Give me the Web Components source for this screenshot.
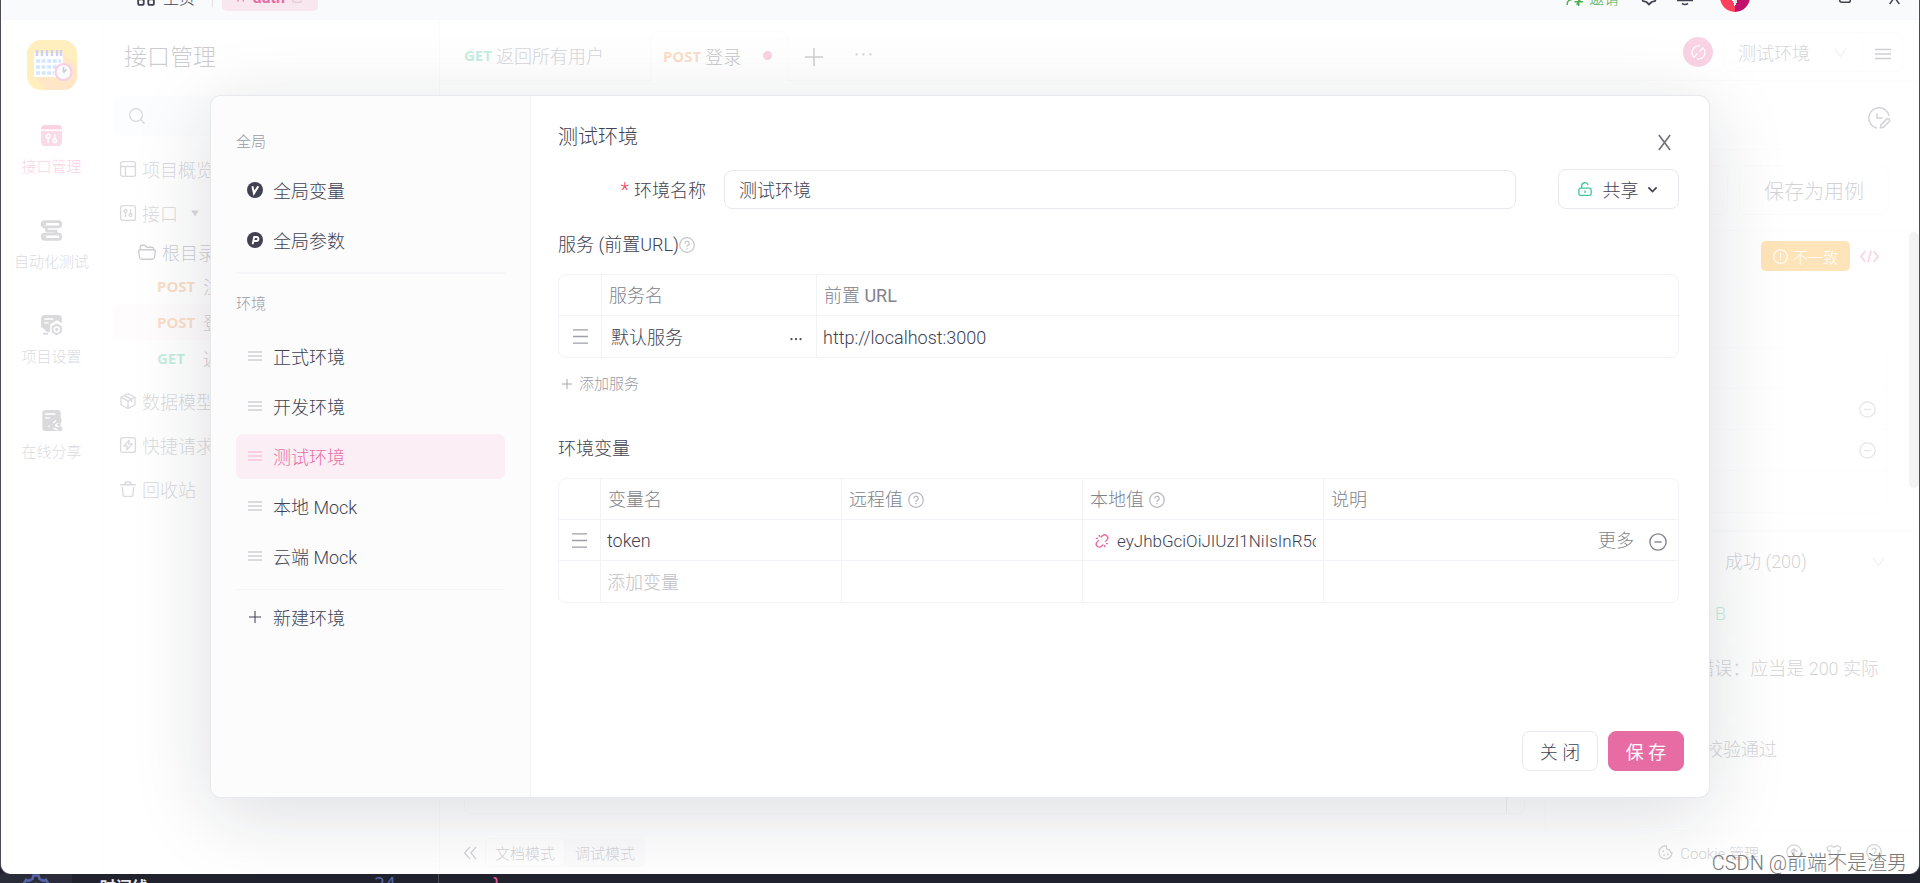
<!DOCTYPE html>
<html lang="zh-CN">
<head>
<meta charset="utf-8">
<title>测试环境</title>
<style>
  html, body { margin: 0; height: 100%; }
  body { background: #20222d; overflow: hidden; }
</style>
</head>
<body>
<app-window></app-window>

<script>
const BASE = `
  *, *::before, *::after { box-sizing: border-box; }
  button, input, select { font: inherit; color: inherit; background: none; border: 0; padding: 0; margin: 0; outline: 0; min-width: 0; }
  button { cursor: pointer; white-space: nowrap; }
  a { color: inherit; text-decoration: none; }
  h1, h2, p { margin: 0; font-weight: inherit; }
`;

function component(name, markup) {
  const template = document.createElement('template');
  template.innerHTML = markup.replace('<style>', '<style>' + BASE);
  customElements.define(name, class extends HTMLElement {
    constructor() {
      super();
      this.attachShadow({ mode: 'open' }).append(template.content.cloneNode(true));
    }
  });
}

const ICONS = {
  home: '<g fill="none" stroke="currentColor" stroke-width="1.6"><rect x="1" y="1" width="5" height="5" rx="1"/><rect x="10" y="1" width="5" height="5" rx="1"/><rect x="1" y="10" width="5" height="5" rx="1.5"/><rect x="10" y="10" width="5" height="5" rx="1.5"/></g>',
  tools: '<path d="M4 2v12M11 2v12M2 6h5M9 10h5" fill="none" stroke="currentColor" stroke-width="1.6"/>',
  copy: '<path d="M5 2h8v8M2 8v4a2 2 0 0 0 2 2h6a2 2 0 0 0 2-2" fill="none" stroke="currentColor" stroke-width="1.4"/>',
  invite: '<g fill="none" stroke="currentColor" stroke-width="1.4"><circle cx="6" cy="4" r="3"/><path d="M1 15c0-3 2-5 5-5M12 8v8M8 12h8M10 15l4-6"/></g>',
  hexnut: '<g fill="none" stroke="currentColor" stroke-width="1.8"><path d="M5 1h6l4.500 7.500-1.500 3.500-3.500 1-2.500 2.500-2.500-2.500-3.500-1L.5 8.500z"/><circle cx="8" cy="7" r="2.500"/></g>',
  bell: '<path d="M3 11V7a5 5 0 0 1 10 0v4M0 11.500h16M5 14.500q3 2 6 0" fill="none" stroke="currentColor" stroke-width="1.600"/>',
  square: '<rect x="2" y="2" width="12" height="12" rx="2" fill="none" stroke="currentColor" stroke-width="1.8"/>',
  close: '<path d="M2 0l12 16M14 0L2 16" fill="none" stroke="currentColor" stroke-width="1.800"/>',
  api: '<path d="M0 3.500A3 3 0 0 1 3 0h10a3 3 0 0 1 3 3v.5z" fill="currentColor"/><path d="M0 4.500h16V13a3 3 0 0 1-3 3H3a3 3 0 0 1-3-3z" fill="currentColor" opacity=".85"/><g fill="none" stroke="#fff" stroke-width="1.1"><circle cx="5.500" cy="8.500" r="1.400"/><path d="M5.500 10v3.500M10.500 7v3.500"/><circle cx="10.500" cy="12" r="1.400"/></g>',
  auto: '<g fill="none" stroke="currentColor" stroke-width="2.200"><rect x="1" y="1.200" width="14" height="4" rx="1.800"/><rect x="1" y="10.800" width="14" height="4" rx="1.800"/></g><path d="M4 6v1.500q0 1 1.200 1h6.300v2" fill="none" stroke="currentColor" stroke-width="2"/><path d="M3 2v2M3 12v2" stroke="currentColor" stroke-width="2"/>',
  projset: '<path d="M3 0h10a3 3 0 0 1 3 3v3l-4-2-5 3v6H5a3 3 0 0 1-2-1.500L0 9V3a3 3 0 0 1 3-3z" fill="currentColor"/><path d="M2.500 3h7M2.500 6h3.500" stroke="#fff" stroke-width="1.100"/><path d="M1.500 13.500h4v1.500h-4z" fill="currentColor"/><path d="M12 6l4.300 2.500v5L12 16l-4.300-2.500v-5z" fill="currentColor" stroke="#fff" stroke-width=".8"/><circle cx="12" cy="11" r="1.900" fill="none" stroke="#fff" stroke-width="1.200"/>',
  share: '<rect x="1" y="0" width="14" height="16" rx="2.500" fill="currentColor"/><path d="M3 3h8M3 6h4" stroke="#fff" stroke-width="1.100"/><g fill="none" stroke="#fff" stroke-width="3.500"><path d="M13.500 8L8.500 12l6 2.500"/></g><g stroke="currentColor" stroke-width="1.400" fill="currentColor"><path d="M13.500 8L8.500 12l6 2.500" fill="none"/><circle cx="13.500" cy="8" r="1.500"/><circle cx="8.500" cy="12" r="1.500"/><circle cx="14.500" cy="14.500" r="1.200"/></g>',
  search: '<g fill="none" stroke="currentColor" stroke-width="1.300"><circle cx="7" cy="7" r="6.400"/><path d="M11.500 11.500L15.500 15.800"/></g>',
  layout: '<g fill="none" stroke="currentColor" stroke-width="1.300"><rect x=".6" y=".6" width="14.800" height="14.800" rx="2"/><path d="M1 5.500h14M5.500 5.500V15"/></g>',
  apibox: '<g fill="none" stroke="currentColor" stroke-width="1.300"><rect x=".6" y=".6" width="14.800" height="14.800" rx="2"/><circle cx="5.500" cy="6" r="1.500"/><path d="M5.500 7.500V12M10.500 4v4.500"/><circle cx="10.500" cy="10" r="1.500"/></g>',
  folder: '<path d="M2 6V3.500A1.500 1.500 0 0 1 3.500 2H6l2 1.800h4.500A1.500 1.500 0 0 1 14 5.300V6M1.800 6h12.400a1.200 1.200 0 0 1 1.200 1.400l-.8 5.500a1.800 1.800 0 0 1-1.700 1.500H3.100a1.800 1.800 0 0 1-1.700-1.500L.6 7.400A1.200 1.200 0 0 1 1.800 6z" fill="none" stroke="currentColor" stroke-width="1.200"/>',
  cube: '<path d="M8 .5l7 3.700v7.600L8 15.500l-7-3.700V4.200zM1.200 4.300L8 7.800l6.800-3.500M8 7.800v7.400M4.500 2.600l7 3.600v3" fill="none" stroke="currentColor" stroke-width="1.300" stroke-linejoin="round"/>',
  bolt: '<rect x=".6" y=".6" width="14.800" height="14.800" rx="2" fill="none" stroke="currentColor" stroke-width="1.300"/><path d="M9.200 3L3.800 9.200h3.500L6.800 13l5.400-6.200H8.700z" fill="none" stroke="currentColor" stroke-width="1.200" stroke-linejoin="round"/>',
  trash: '<path d="M.2 3.800h15.600M5 3.500V2.300A1.500 1.500 0 0 1 6.500 1h3A1.500 1.500 0 0 1 11 2.300v1.200M2.300 6l.7 7.500a2 2 0 0 0 2 1.900h6a2 2 0 0 0 2-1.900L13.700 6" fill="none" stroke="currentColor" stroke-width="1.400"/>',
  caret: '<path d="M2 4h12l-6 9z" fill="currentColor"/>',
  plus: '<path d="M8 0v16M0 8h16" stroke="currentColor" stroke-width="1.400"/>',
  more: '<g fill="currentColor"><circle cx="2" cy="8" r="1.500"/><circle cx="8" cy="8" r="1.500"/><circle cx="14" cy="8" r="1.500"/></g>',
  dots: '<g fill="currentColor"><circle cx="1.500" cy="6" r="1"/><circle cx="8" cy="6" r="1"/><circle cx="14.500" cy="6" r="1"/></g>',
  menu: '<path d="M0 3.500h16M0 8h16M0 12.500h16" stroke="currentColor" stroke-width="1.700"/>',
  drag: '<path d="M0 1h16M0 8h16M0 15h16" stroke="currentColor" stroke-width="1.400"/>',
  grip: '<path d="M1 4h14M1 8h14M1 12h14" stroke="currentColor" stroke-width="1.400"/>',
  chevron: '<path d="M1 3l7 10 7-10" fill="none" stroke="currentColor" stroke-width="1.200"/>',
  down: '<path d="M2 5l6 6 6-6" fill="none" stroke="currentColor" stroke-width="2.400"/>',
  noproxy: '<g fill="none" stroke="currentColor" stroke-width="1.300"><path d="M9.500 1.200A7 7 0 0 0 3.200 13M6.500 14.800A7 7 0 0 0 12.800 3M3 13.500L6.800 9M9.200 7L13 2.500"/></g>',
  clockedit: '<g fill="none" stroke="currentColor" stroke-width="1.100"><path d="M15.400 6.500A7.500 7.500 0 1 0 6.500 15.400M6.500 4.500V8h4M9 15.200l.4-2.200 4.200-4.200a1.200 1.200 0 0 1 1.800 1.800l-4.200 4.200z"/></g>',
  warn: '<circle cx="8" cy="8" r="7.200" fill="none" stroke="currentColor" stroke-width="1.200"/><path d="M8 4v5M8 10.500V12" stroke="currentColor" stroke-width="1.300"/>',
  code: '<path d="M4.500 3.500L.8 8l3.700 4.500M11.500 3.500L15.200 8l-3.700 4.500M9.300 3L6.700 13" fill="none" stroke="currentColor" stroke-width="1.400"/>',
  minus: '<circle cx="8" cy="8" r="7.200" fill="none" stroke="currentColor" stroke-width="1.200"/><path d="M4.800 8h6.400" stroke="currentColor" stroke-width="1.200"/>',
  help: '<circle cx="8" cy="8" r="7.300" fill="none" stroke="currentColor" stroke-width="1.200"/><path d="M5.800 6.400a2.200 2.200 0 1 1 3.200 2q-1 .5-1 1.400M8 11v1.300" fill="none" stroke="currentColor" stroke-width="1.200"/>',
  v: '<circle cx="8" cy="8" r="8" fill="currentColor"/><path d="M5.400 4.200L7 11.300l4.300-7.100" fill="none" stroke="#fff" stroke-width="2"/>',
  p: '<circle cx="8" cy="8" r="8" fill="currentColor"/><path d="M5.600 12.200L7.200 5h2.300a1.800 1.800 0 0 1-.3 4H6.600" fill="none" stroke="#fff" stroke-width="1.900"/>',
  lock: '<g fill="none" stroke="currentColor" stroke-width="1.500"><rect x="1" y="7" width="14" height="8.300" rx="2"/><path d="M4.200 7V4.600a3.800 3.800 0 0 1 7.400-1.200M8 9.800v2.800"/></g>',
  unlink: '<g fill="none" stroke="currentColor" stroke-width="1.600"><path d="M6.500 4L8.500 2a3.500 3.500 0 0 1 5 5l-2 2M9.500 12l-2 2a3.500 3.500 0 0 1-5-5l2-2M5 1v2.500M1 5h2.500M11 12.500V15M12.500 11H15"/></g>',
  collapse: '<path d="M8 1L2 8l6 7M15 1L9 8l6 7" fill="none" stroke="currentColor" stroke-width="1.500"/>',
  cookie: '<path d="M9 1A7 7 0 1 0 15 8.500 3 3 0 0 1 12.500 5 3 3 0 0 1 9 1z" fill="none" stroke="currentColor" stroke-width="1.300"/><g fill="currentColor"><circle cx="5.500" cy="6.500" r="1"/><circle cx="6.500" cy="11" r="1"/><circle cx="10.500" cy="10" r="1"/></g>',
  up: '<circle cx="8" cy="8" r="7.200" fill="none" stroke="currentColor" stroke-width="1.200"/><path d="M8 12V5M4.800 8L8 4.800 11.200 8" fill="none" stroke="currentColor" stroke-width="1.400"/>',
  shirt: '<path d="M5 1.500L1 3.500 2 7l2-.5V14.500h8V6.500l2 .5 1-3.500-4-2q-3 3-6 0z" fill="none" stroke="currentColor" stroke-width="1.300" stroke-linejoin="round"/>',
  gear: '<g fill="none" stroke="currentColor" stroke-width="1.400"><circle cx="8" cy="8" r="2.500"/><path d="M6.500.8h3l.5 2 1.700 1 2-.6 1.500 2.600L13.700 8l1.500 2.200-1.500 2.600-2-.6-1.700 1-.5 2h-3l-.5-2-1.700-1-2 .6L.8 10.200 2.300 8 .8 5.800l1.500-2.600 2 .6 1.700-1z"/></g>',
};

customElements.define('ui-icon', class extends HTMLElement {
  connectedCallback() {
    if (this.shadowRoot) return;
    const size = this.getAttribute('size') || 16;
    this.attachShadow({ mode: 'open' }).innerHTML = `
      <style>:host { display: inline-flex; flex: none; vertical-align: middle; } svg { display: block; overflow: visible; }</style>
      <svg viewBox="0 0 16 16" width="${size}" height="${size}" aria-hidden="true">${ICONS[this.getAttribute('name')]}</svg>`;
  }
});

component('title-bar', `
<style>
  :host { display: flex; align-items: flex-end; height: 20px; overflow: hidden; background: #f9fafc; }
  .row { flex: 1; display: flex; align-items: center; height: 46px; padding: 0 18px 0 136px; font-size: 16px; }
  .home { display: flex; align-items: center; gap: 8px; }
  .sep { width: 1px; height: 20px; background: #e0e1e6; margin: 0 9px 0 17px; }
  .tab { display: flex; align-items: center; gap: 6px; height: 28px; padding: 0 13px; border-radius: 5px; background: #f8e7ef; color: #e96da5; font-weight: 700; font-size: 16px; }
  .tab ui-icon:last-child { color: #ddc5d0; }
  .right { margin-left: auto; display: flex; align-items: center; }
  .invite { display: flex; gap: 6px; align-items: center; color: #4caf50; margin-right: 22px; font-size: 15px; }
  .right > ui-icon { margin-right: 20px; }
  .avatar { width: 30px; height: 30px; border-radius: 50%; margin: 0 88px 0 7px; background: conic-gradient(at 50% 82%, #e4e2dc 0 22deg, #c20f6c 22deg 180deg, #ff3f5c 180deg 335deg, #f3f1ec 335deg); }
  .right > .box { margin-right: 36px; }
  .right > .x { margin-right: 0; }
</style>
<div class="row">
  <a class="home" href="#home"><ui-icon name="home" size="18"></ui-icon>主页</a>
  <span class="sep"></span>
  <a class="tab" href="#auth"><ui-icon name="tools" size="12"></ui-icon>auth<ui-icon name="copy" size="14"></ui-icon></a>
  <div class="right">
    <a class="invite" href="#invite"><ui-icon name="invite" size="17"></ui-icon>邀请</a>
    <ui-icon name="hexnut"></ui-icon>
    <ui-icon name="bell"></ui-icon>
    <span class="avatar"></span>
    <ui-icon class="box" name="square" size="14"></ui-icon>
    <ui-icon class="x" name="close" size="13"></ui-icon>
  </div>
</div>`);

component('nav-item', `
<style>
  :host { display: block; color: #82848f; font-size: 15px; line-height: 20px; }
  :host([active]) { color: #e96da5; }
  a { display: flex; flex-direction: column; align-items: center; gap: 11px; }
</style>
<a href="#nav"><slot name="icon"></slot><slot></slot></a>`);

component('side-nav', `
<style>
  :host { display: flex; flex-direction: column; align-items: center; gap: 43px; width: 101px; padding-top: 20px; }
  .logo { display: block; margin-bottom: -8px; }
</style>
<svg class="logo" width="50" height="50" viewBox="0 0 50 50" role="img" aria-label="项目">
  <clipPath id="r"><rect width="50" height="50" rx="14"/></clipPath>
  <g clip-path="url(#r)">
    <rect width="50" height="50" fill="#ffca28"/>
    <path d="M36 13l14 13v24H19L7 37z" fill="#ffab40"/>
    <rect x="7" y="13" width="29" height="24" fill="#fff"/>
    <g stroke="#5567d8" stroke-width="2.400"><path d="M10 10v6M15 10v6M20 10v6M25 10v6M30 10v6M34 10v6"/></g>
    <g stroke="#6aaef6" stroke-width="3.500" stroke-dasharray="4 1.600"><path d="M9 21h25M9 27h25M9 33h18"/></g>
    <circle cx="36.500" cy="32" r="8" fill="#eef0f5" stroke="#e45aa4" stroke-width="2.200"/>
    <path d="M36.500 27v5.500M36.500 32.500l3-3" stroke="#555" stroke-width="1.600"/>
  </g>
</svg>
<nav-item active><ui-icon slot="icon" name="api" size="21"></ui-icon>接口管理</nav-item>
<nav-item><ui-icon slot="icon" name="auto" size="21"></ui-icon>自动化测试</nav-item>
<nav-item><ui-icon slot="icon" name="projset" size="21"></ui-icon>项目设置</nav-item>
<nav-item><ui-icon slot="icon" name="share" size="21"></ui-icon>在线分享</nav-item>`);

component('tree-row', `
<style>
  :host { display: block; height: 44px; color: #80828c; }
  a { display: flex; align-items: center; gap: 6px; height: 100%; padding-left: 7px; white-space: nowrap; }
  :host([level="1"]) { height: 33px; color: #5b5d68; }
  :host([level="1"]) a { padding-left: 25px; }
  :host([level="2"]) { height: 36px; color: #5b5d68; }
  :host([level="2"]) a { padding-left: 44px; gap: 0; }
  :host([active]) { background: #fdf5f8; border-radius: 6px; }
  ::slotted(b) { width: 46px; font: 700 15px "Open Sans", sans-serif; }
  ::slotted(.post) { color: #ef8f4a; }
  ::slotted(.get) { color: #42c796; }
</style>
<a href="#row"><slot></slot></a>`);

component('api-tree', `
<style>
  :host { display: block; width: 338px; padding: 0 11px 0 10px; border-left: 1px solid #f6f7f8; border-right: 1px solid #f0f1f3; border-top-left-radius: 10px; font-size: 18px; overflow: hidden; }
  h1 { font-size: 23px; line-height: 32px; padding: 22px 0 22px 11px; color: #50525e; }
  .search { display: flex; align-items: center; height: 40px; padding-left: 16px; margin-bottom: 11px; background: #f6f7fb; border-radius: 8px; color: #80828c; }
  .search input { flex: 1; }
  .folder { margin-bottom: 3px; }
  ui-icon[name="caret"] { margin-left: 6px; }
</style>
<h1>接口管理</h1>
<label class="search"><ui-icon name="search"></ui-icon><input type="search" aria-label="搜索"></label>
<tree-row><ui-icon name="layout"></ui-icon>项目概览</tree-row>
<tree-row><ui-icon name="apibox"></ui-icon>接口<ui-icon name="caret" size="10"></ui-icon></tree-row>
<div class="folder">
  <tree-row level="1"><ui-icon name="folder" size="18"></ui-icon>根目录</tree-row>
  <tree-row level="2"><b class="post">POST</b>注册</tree-row>
  <tree-row level="2" active><b class="post">POST</b>登录</tree-row>
  <tree-row level="2"><b class="get">GET</b>返回所有用户</tree-row>
</div>
<tree-row><ui-icon name="cube"></ui-icon>数据模型</tree-row>
<tree-row><ui-icon name="bolt"></ui-icon>快捷请求</tree-row>
<tree-row><ui-icon name="trash"></ui-icon>回收站</tree-row>`);

component('tab-bar', `
<style>
  :host { display: flex; align-items: flex-end; height: 61px; padding-right: 16px; font-size: 18px; background: #fdfdfd; box-shadow: inset 0 -1px #eef0f2; color: #70727d; }
  b { font: 700 15px "Open Sans", sans-serif; }
  .get { color: #42c796; } .post { color: #ef8f4a; }
  .tab { display: flex; align-items: center; gap: 4px; height: 50px; padding-bottom: 2px; margin-left: 24px; }
  .active { padding: 0 15px 2px 12px; margin-left: 46px; width: 138px; border: 1px solid #f3f4f6; border-bottom: 0; border-radius: 8px 8px 0 0; background: #fff; color: #3a3c48; }
  .dot { width: 9px; height: 9px; margin-left: auto; border-radius: 50%; background: #e96da5; }
  button { height: 50px; margin-left: 17px; padding-bottom: 2px; color: #60626c; }
  button + button { margin-left: 32px; }
  .right { display: flex; align-items: center; gap: 11px; margin-left: auto; padding-bottom: 9px; }
  .proxy { display: grid; place-items: center; width: 30px; height: 30px; padding: 0; border-radius: 50%; background: #e96da5; color: #fff; margin: 0; }
  .env { display: flex; align-items: center; width: 179px; height: 40px; border: 1px solid #f3f4f6; border-radius: 8px; background: #fff; }
  .env select { appearance: none; flex: 1; padding: 2px 0 0 13px; height: 38px; }
  .env > ui-icon { color: #b5b7bd; margin-right: 15px; }
  .env button { width: 40px; height: 38px; margin: 0; padding: 0; border-left: 1px solid #f3f4f6; }
</style>
<a class="tab" href="#get"><b class="get">GET</b>返回所有用户</a>
<a class="tab active" href="#post"><b class="post">POST</b>登录<span class="dot"></span></a>
<button aria-label="新建标签"><ui-icon name="plus" size="18"></ui-icon></button>
<button aria-label="更多标签"><ui-icon name="dots" size="17"></ui-icon></button>
<div class="right">
  <button class="proxy" aria-label="代理"><ui-icon name="noproxy" size="15"></ui-icon></button>
  <div class="env">
    <select aria-label="当前环境"><option>测试环境</option></select>
    <ui-icon name="chevron" size="13"></ui-icon>
    <button aria-label="管理环境"><ui-icon name="menu" size="16"></ui-icon></button>
  </div>
</div>`);

component('request-panel', `
<style>
  :host { flex: 1; display: flex; flex-direction: column; min-height: 0; font-size: 18px; color: #6a6c76; }
  .head { height: 69px; margin-right: 19px; padding: 6px 10px 0 0; display: flex; align-items: center; justify-content: flex-end; border-bottom: 1px solid #f6f7f8; }
  .actions { height: 81px; display: flex; align-items: center; justify-content: flex-end; gap: 11px; padding-right: 30px; border-bottom: 1px solid #f6f7f8; font-size: 20px; }
  .actions button { width: 150px; height: 50px; border: 1px solid #f3f4f6; border-radius: 8px; }
  .body { display: flex; height: 301px; border-bottom: 2px solid #f6f7f8; }
  .fields { flex: 1; }
  .status { display: flex; align-items: center; justify-content: flex-end; gap: 10px; height: 51px; padding-right: 10px; margin-right: 20px; border-bottom: 1px solid #f9fafa; color: #e96da5; }
  .badge { display: flex; align-items: center; gap: 5px; height: 30px; padding: 0 12px; border-radius: 5px; background: #ffa516; color: #fff; font-size: 15px; }
  table { width: calc(100% - 45px); margin: 65px 0 0 24px; border-spacing: 0; border: 1px solid #f6f7f8; border-radius: 8px; }
  td { height: 41px; padding: 0 11px; text-align: right; line-height: 18px; border-bottom: 1px solid #f6f7f8; color: #a5a7ae; }
  tr:last-child td { border: 0; }
  .thumb { width: 10px; height: 256px; margin-top: 1px; border-radius: 5px; background: #d5d6d8; }
  .response { flex: 1; display: grid; grid-template-columns: 1fr 374px; min-height: 0; }
  .preview { margin: 16px 20px 16px 24px; border: 1px solid #f0f1f3; border-radius: 8px; padding-right: 17px; }
  .preview div { height: 100%; border-right: 1px solid #cfd1d6; }
  .checks { border-left: 1px solid #f3f4f6; padding-right: 20px; }
  .result { display: flex; align-items: center; height: 59px; padding: 0 14px 0 179px; }
  .result select { appearance: none; flex: 1; }
  .result ui-icon { color: #b5b7bd; }
  .checks p { display: flex; align-items: center; height: 44px; margin-bottom: 11px; border-radius: 6px; background: #fafefc; white-space: nowrap; justify-content: flex-end; }
  .checks .size { color: #42c796; padding-right: 173px; }
  .checks .error { height: 68px; align-items: flex-start; padding: 8px 20px 0 0; margin-bottom: 12px; }
  .checks .pass { padding-right: 122px; }
</style>
<div class="head"><ui-icon name="clockedit" size="22"></ui-icon></div>
<div class="actions"><button aria-label="保存"></button><button>保存为用例</button></div>
<div class="body">
  <div class="fields">
    <div class="status"><span class="badge"><ui-icon name="warn" size="15"></ui-icon>不一致</span><ui-icon name="code" size="19"></ui-icon></div>
    <table aria-label="返回字段">
      <tr><td></td></tr>
      <tr><td><ui-icon name="minus" size="17"></ui-icon></td></tr>
      <tr><td><ui-icon name="minus" size="17"></ui-icon></td></tr>
      <tr><td></td></tr>
    </table>
  </div>
  <div class="thumb"></div>
</div>
<div class="response">
  <div class="preview"><div></div></div>
  <div class="checks">
    <label class="result"><select aria-label="返回响应"><option>成功 (200)</option></select><ui-icon name="chevron" size="13"></ui-icon></label>
    <p class="size">5 B</p>
    <p class="error">错误：应当是 200 实际</p>
    <p class="pass">校验通过</p>
  </div>
</div>`);

component('status-bar', `
<style>
  :host { display: flex; align-items: center; height: 44px; padding: 0 37px 1px 23px; border-top: 1px solid #f6f7f8; font-size: 15px; color: #6a6c76; }
  .modes { display: flex; margin-left: 8px; border-radius: 6px; background: #f5f5f9; }
  .modes button { width: 80px; height: 29px; border-radius: 6px; }
  .modes .on { background: #fff; border: 1px solid #f0f1f3; }
  .right { margin-left: auto; display: flex; align-items: center; gap: 24px; }
  .cookie { display: flex; align-items: center; gap: 7px; margin-right: 3px; }
</style>
<button aria-label="收起"><ui-icon name="collapse" size="14"></ui-icon></button>
<div class="modes"><button class="on">文档模式</button><button>调试模式</button></div>
<div class="right">
  <a class="cookie" href="#cookie"><ui-icon name="cookie" size="15"></ui-icon>Cookie 管理</a>
  <ui-icon name="up"></ui-icon><ui-icon name="shirt"></ui-icon><ui-icon name="help"></ui-icon>
</div>`);

component('env-item', `
<style>
  :host { display: block; height: 45px; border-radius: 7px; }
  :host([active]) { background: #fbeff5; color: #e96da5; }
  a { display: flex; align-items: center; gap: 10px; height: 100%; padding: 0 0 2px 11px; }
  ::slotted(ui-icon[name="grip"]) { color: #cfd0d5; }
  :host([active]) ::slotted(ui-icon) { color: #f5c6db; }
</style>
<a href="#env"><slot name="icon"></slot><span><slot></slot></span></a>`);

component('env-sidebar', `
<style>
  :host { display: block; width: 320px; padding: 31px 25px 0; background: #fcfcfd; border-right: 1px solid #f2f3f6; border-radius: 10px 0 0 10px; }
  h2 { font-size: 15px; line-height: 30px; color: #9a9ba5; }
  .group { display: grid; gap: 5px; margin-top: 11px; }
  .envs { margin-top: 15px; }
  .rule { height: 2px; margin: 9px 0 15px; background: #f5f5f7; }
  .thin { height: 1px; margin: 10px 0 5px; }
</style>
<h2>全局</h2>
<div class="group">
  <env-item><ui-icon slot="icon" name="v"></ui-icon>全局变量</env-item>
  <env-item><ui-icon slot="icon" name="p"></ui-icon>全局参数</env-item>
</div>
<div class="rule"></div>
<h2>环境</h2>
<div class="group envs">
  <env-item><ui-icon slot="icon" name="grip"></ui-icon>正式环境</env-item>
  <env-item><ui-icon slot="icon" name="grip"></ui-icon>开发环境</env-item>
  <env-item active><ui-icon slot="icon" name="grip"></ui-icon>测试环境</env-item>
  <env-item><ui-icon slot="icon" name="grip"></ui-icon>本地 Mock</env-item>
  <env-item><ui-icon slot="icon" name="grip"></ui-icon>云端 Mock</env-item>
</div>
<div class="rule thin"></div>
<env-item><ui-icon slot="icon" name="plus" size="12" style="margin:0 2px"></ui-icon>新建环境</env-item>`);

const TABLE = `
  :host { display: block; }
  table { width: 100%; table-layout: fixed; border-spacing: 0; border: 1px solid #f2f3f7; border-radius: 8px; text-align: left; }
  th, td { height: 41px; padding: 2px 7px 0; font-weight: inherit; line-height: 26px; border-right: 1px solid #f2f3f7; border-bottom: 1px solid #f2f3f7; }
  tr > :last-child { border-right: 0; }
  tbody tr:last-child td { border-bottom: 0; }
  th { color: #80828c; }
  th b { font-weight: 400; }
  td:first-child { text-align: center; padding: 0; line-height: 0; color: #9ea0a9; }
  .title { display: flex; align-items: center; gap: 5px; }
  th ui-icon { color: #b4b6bc; }
  .cell { display: flex; align-items: center; }
  input { width: 100%; }
  input::placeholder { color: #bfc0c6; opacity: 1; }
`;

component('service-table', `
<style>${TABLE}
  .cell { justify-content: space-between; padding: 0 7px 0 2px; }
  td.url { padding-left: 6px; }
</style>
<table>
  <colgroup><col style="width:43px"><col style="width:215px"><col></colgroup>
  <thead><tr><th></th><th>服务名</th><th>前置 <b>URL</b></th></tr></thead>
  <tbody><tr>
    <td><ui-icon name="drag" size="15"></ui-icon></td>
    <td><div class="cell">默认服务<button aria-label="服务操作"><ui-icon name="more" size="12"></ui-icon></button></div></td>
    <td class="url"><input aria-label="前置 URL" value="http://localhost:3000"></td>
  </tr></tbody>
</table>`);

component('variable-table', `
<style>${TABLE}
  td { padding-left: 6px; }
  .local { gap: 8px; padding-left: 6px; }
  .local ui-icon { color: #e96da5; }
  .local input { font-size: 17px; }
  .ops { justify-content: flex-end; gap: 15px; padding-right: 4px; color: #80828c; }
</style>
<table>
  <colgroup><col style="width:42px"><col style="width:241px"><col style="width:241px"><col style="width:241px"><col></colgroup>
  <thead><tr><th></th><th>变量名</th><th><span class="title">远程值<ui-icon name="help"></ui-icon></span></th><th><span class="title">本地值<ui-icon name="help"></ui-icon></span></th><th>说明</th></tr></thead>
  <tbody>
    <tr>
      <td><ui-icon name="drag" size="15"></ui-icon></td>
      <td><input aria-label="变量名" value="token"></td>
      <td></td>
      <td><div class="cell local"><ui-icon name="unlink" size="14"></ui-icon><input aria-label="本地值" value="eyJhbGciOiJIUzI1NiIsInR5c"></div></td>
      <td><div class="cell ops"><button>更多</button><button aria-label="删除变量"><ui-icon name="minus" size="18"></ui-icon></button></div></td>
    </tr>
    <tr><td></td><td><input aria-label="新变量" placeholder="添加变量"></td><td></td><td></td><td></td></tr>
  </tbody>
</table>`);

component('env-dialog', `
<style>
  :host { display: flex; background: #fff; border-radius: 10px; color: #404251; font-size: 18px; box-shadow: 0 0 1px 1px #e6e8ec, 0 16px 80px rgba(20, 28, 50, .15); }
  section { flex: 1; display: flex; flex-direction: column; min-width: 0; padding: 24px 30px 26px 27px; }
  header { display: flex; justify-content: space-between; align-items: center; height: 30px; font-size: 20px; }
  header button { align-self: flex-end; padding: 0 7px 0 0; color: #70727c; line-height: 14px; }
  form { display: flex; align-items: center; margin-top: 19px; }
  label { width: 148px; text-align: right; }
  label::before { content: "*"; color: #f04864; margin-right: 5px; font-size: 20px; }
  form input { flex: 1; height: 39px; margin-left: 18px; padding: 0 14px; border: 1px solid #e8e9ee; border-radius: 8px; }
  .share { display: flex; align-items: center; justify-content: center; width: 121px; height: 40px; margin-left: 42px; padding-right: 2px; border: 1px solid #e8e9ee; border-radius: 8px; }
  .share ui-icon:first-child { color: #42c796; margin-right: 11px; }
  .share ui-icon:last-child { margin-left: 8px; }
  h2 { font-size: 18px; line-height: 30px; }
  .services { margin: 21px 0 14px; display: flex; align-items: center; }
  .services ui-icon { color: #c5c6cb; }
  .add { display: flex; align-items: center; gap: 7px; align-self: flex-start; margin: 11px 0 35px; padding-left: 4px; line-height: 30px; font-size: 15px; color: #9a9ba5; }
  variable-table { margin-top: 14px; }
  footer { display: flex; justify-content: flex-end; gap: 10px; margin-top: auto; margin-right: -5px; }
  footer button { width: 76px; height: 40px; border: 1px solid #e8e9ee; border-radius: 8px; }
  footer .primary { border-color: #e86ca4; background: #e86ca4; color: #fff; font-weight: 400; }
</style>
<env-sidebar></env-sidebar>
<section>
  <header>测试环境<button aria-label="关闭窗口"><ui-icon name="close" size="15"></ui-icon></button></header>
  <form>
    <label for="name">环境名称</label><input id="name" value="测试环境">
    <button class="share" type="button"><ui-icon name="lock" size="14"></ui-icon>共享<ui-icon name="down" size="11"></ui-icon></button>
  </form>
  <h2 class="services">服务 (前置URL)<ui-icon name="help"></ui-icon></h2>
  <service-table></service-table>
  <button class="add"><ui-icon name="plus" size="10"></ui-icon>添加服务</button>
  <h2>环境变量</h2>
  <variable-table></variable-table>
  <footer><button>关 闭</button><button class="primary">保 存</button></footer>
</section>`);

component('editor-strip', `
<style>
  :host { display: flex; height: 9px; overflow: hidden; background: #20222d; font: 400 19px/20px "Noto Sans", "Noto Sans CJK SC", sans-serif; color: #5563a8; }
  .activity { width: 72px; padding-left: 22px; background: #2a2c3a; }
  .timeline { display: flex; gap: 10px; width: 302px; padding: 3px 0 0 12px; font-size: 16px; font-weight: 700; color: #e8e9ee; }
  .line { width: 64px; }
  .brace { border-left: 1px solid #4a4c58; padding-left: 54px; color: #e0569a; }
</style>
<div class="activity"><ui-icon name="gear" size="28"></ui-icon></div>
<div class="timeline"><span>›</span><span>时间线</span></div>
<div class="line">24</div>
<div class="brace">}</div>`);

component('app-window', `
<style>
  :host { display: flex; flex-direction: column; height: 100vh; position: relative; font: 300 18px "Roboto", "Noto Sans CJK SC", sans-serif; color: #404251; }
  .window { flex: 1; display: flex; flex-direction: column; min-height: 0; margin: 0 1px; border-radius: 0 0 10px 10px; background: #fff; overflow: hidden; box-shadow: 0 0 0 1px #4a4c58; }
  .body { flex: 1; display: flex; position: relative; min-height: 0; }
  main { flex: 1; display: flex; flex-direction: column; min-width: 0; }
  .mask { position: absolute; inset: 0; display: grid; padding: 76px 210px 77px; background: rgba(255, 255, 255, .7); }
  .credit { position: absolute; right: 13px; bottom: 6px; font-size: 20px; line-height: 28px; color: #77787c; }
</style>
<div class="window">
  <title-bar></title-bar>
  <div class="body">
    <side-nav></side-nav>
    <api-tree></api-tree>
    <main><tab-bar></tab-bar><request-panel></request-panel><status-bar></status-bar></main>
    <div class="mask"><env-dialog role="dialog" aria-label="环境管理"></env-dialog></div>
  </div>
</div>
<editor-strip></editor-strip>
<div class="credit">CSDN @前端不是渣男</div>`);
</script>
</body>
</html>
